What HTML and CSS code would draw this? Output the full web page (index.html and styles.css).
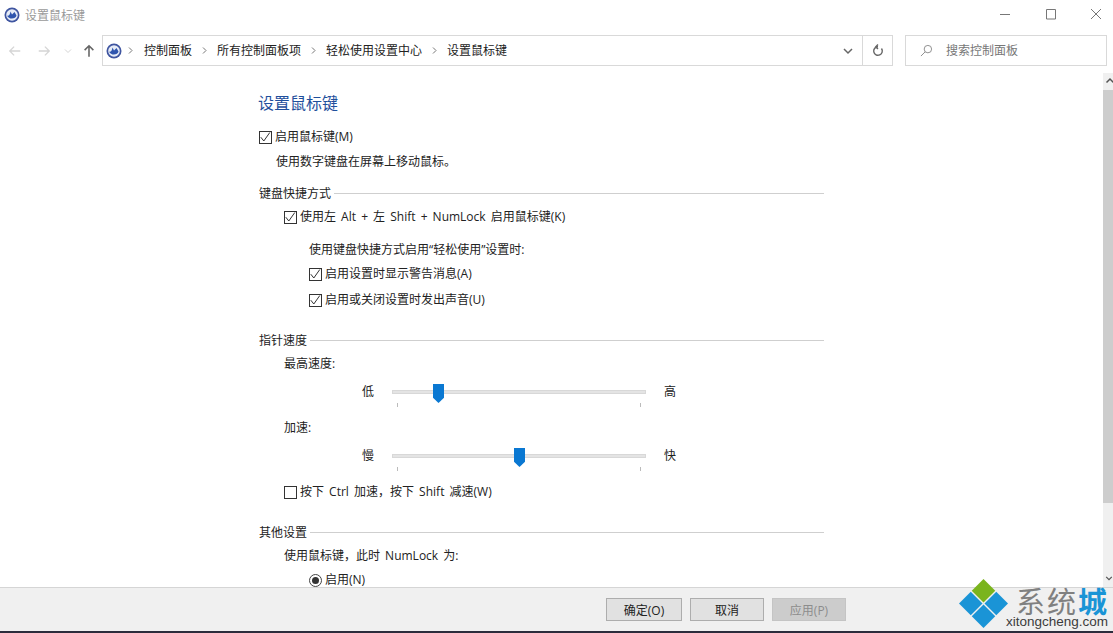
FILE: index.html
```html
<!DOCTYPE html>
<html lang="zh-CN">
<head>
<meta charset="utf-8">
<title>设置鼠标键</title>
<link rel="stylesheet" href="styles.css">
</head>
<body>
<div class="window">
  <header class="titlebar">
    <svg class="appicon" viewBox="0 0 16 16"><circle cx="8" cy="8" r="7.500" fill="#3f55a0"/><circle cx="8" cy="8" r="5.800" fill="#e6ecf7"/><path d="M3 8.500c1.500 1 3-.5 3.500-4l1.500 3 2.500-2.500 2 3.500c-.5 3-7 5-9.500 0z" fill="#2f55ae"/></svg>
    <span class="title">设置鼠标键</span>
    <div class="wincontrols">
      <svg class="winbtn" viewBox="0 0 46 32"><path d="M18 14.500h10" stroke="#777" fill="none"/></svg>
      <svg class="winbtn" viewBox="0 0 46 32"><path d="M18.500 9.500h9v9.500h-9z" stroke="#777" fill="none"/></svg>
      <svg class="winbtn" viewBox="0 0 46 32"><path d="M18 9l10 10M28 9L18 19" stroke="#777" fill="none"/></svg>
    </div>
  </header>
  <nav class="navbar">
    <div class="navbtns">
      <svg class="nav-arrow" viewBox="0 0 16 16"><path d="M14 8H2M7 3L2 8l5 5" stroke="#d5d5d5" stroke-width="1.500" fill="none"/></svg>
      <svg class="nav-arrow" viewBox="0 0 16 16"><path d="M2 8h12M9 3l5 5-5 5" stroke="#d5d5d5" stroke-width="1.500" fill="none"/></svg>
      <svg class="nav-down" viewBox="0 0 8 8"><path d="M1 2.500l3 3 3-3" stroke="#d5d5d5" fill="none"/></svg>
      <svg class="nav-arrow up" viewBox="0 0 16 16"><path d="M8 14.500V2M3 7l5-5 5 5" stroke="#666" stroke-width="1.800" fill="none"/></svg>
    </div>
    <div class="address">
      <svg class="appicon" viewBox="0 0 16 16"><circle cx="8" cy="8" r="7.500" fill="#3f55a0"/><circle cx="8" cy="8" r="5.800" fill="#e6ecf7"/><path d="M3 8.500c1.500 1 3-.5 3.500-4l1.500 3 2.500-2.500 2 3.500c-.5 3-7 5-9.500 0z" fill="#2f55ae"/></svg>
      <svg class="sep" viewBox="0 0 5 7"><path d="M1 .5l3 3-3 3" stroke="#777" fill="none"/></svg><span class="crumb">控制面板</span>
      <svg class="sep" viewBox="0 0 5 7"><path d="M1 .5l3 3-3 3" stroke="#777" fill="none"/></svg><span class="crumb">所有控制面板项</span>
      <svg class="sep" viewBox="0 0 5 7"><path d="M1 .5l3 3-3 3" stroke="#777" fill="none"/></svg><span class="crumb">轻松使用设置中心</span>
      <svg class="sep" viewBox="0 0 5 7"><path d="M1 .5l3 3-3 3" stroke="#777" fill="none"/></svg><span class="crumb">设置鼠标键</span>
      <div class="addr-right">
        <svg class="chev" viewBox="0 0 10 8"><path d="M1 2l4 4 4-4" stroke="#666" stroke-width="1.500" fill="none"/></svg>
        <div class="refresh"><svg viewBox="0 0 14 14"><path d="M10.500 4.500a4.300 4.300 0 1 1-3.500-1.800H5M7 .5L4.800 2.700 7 4.900" stroke="#666" stroke-width="1.400" fill="none"/></svg></div>
      </div>
    </div>
    <div class="search">
      <svg class="searchicon" viewBox="0 0 14 14"><circle cx="8.500" cy="5.500" r="4" stroke="#888" fill="none"/><path d="M5.500 8.500L1 13" stroke="#888" fill="none"/></svg>
      <span class="searchtext">搜索控制面板</span>
    </div>
  </nav>
  <div class="body">
    <main class="content">
      <h1 class="heading">设置鼠标键</h1>
      <div class="check m"><span class="box"><svg viewBox="0 0 11 11"><path d="M.8 5.200l3 3.800L9.800.5" stroke="#333" fill="none"/></svg></span>启用鼠标键(M)</div>
      <p class="desc">使用数字键盘在屏幕上移动鼠标。</p>

      <div class="legend first"><span>键盘快捷方式</span></div>
      <div class="check indent1 k"><span class="box"><svg viewBox="0 0 11 11"><path d="M.8 5.200l3 3.800L9.800.5" stroke="#333" fill="none"/></svg></span>使用左 Alt + 左 Shift + NumLock 启用鼠标键(K)</div>
      <p class="sub">使用键盘快捷方式启用“轻松使用”设置时:</p>
      <div class="check indent2 a"><span class="box"><svg viewBox="0 0 11 11"><path d="M.8 5.200l3 3.800L9.800.5" stroke="#333" fill="none"/></svg></span>启用设置时显示警告消息(A)</div>
      <div class="check indent2 u"><span class="box"><svg viewBox="0 0 11 11"><path d="M.8 5.200l3 3.800L9.800.5" stroke="#333" fill="none"/></svg></span>启用或关闭设置时发出声音(U)</div>

      <div class="legend speed"><span>指针速度</span></div>
      <p class="label top">最高速度:</p>
      <div class="sliderrow one"><span class="lo">低</span><div class="slider"><div class="track"></div><div class="thumb t1"></div><i class="tick l"></i><i class="tick r"></i></div><span class="hi">高</span></div>
      <p class="label accel">加速:</p>
      <div class="sliderrow two"><span class="lo">慢</span><div class="slider"><div class="track"></div><div class="thumb t2"></div><i class="tick l"></i><i class="tick r"></i></div><span class="hi">快</span></div>
      <div class="check indent1 w"><span class="box"></span>按下 Ctrl 加速&#xFF0C;按下 Shift 减速(W)</div>

      <div class="legend other"><span>其他设置</span></div>
      <p class="label num">使用鼠标键&#xFF0C;此时 NumLock 为:</p>
      <div class="radio"><span class="dot"></span>启用(N)</div>
    </main>
    <div class="scrollbar">
      <div class="sb-btn"><svg class="sb-arrow" viewBox="0 0 10 8"><path d="M1.500 5.500L5 2l3.500 3.500" stroke="#555" stroke-width="1.500" fill="none"/></svg></div>
      <div class="sb-thumb"></div>
      <div class="sb-rest"><svg class="sb-arrow" viewBox="0 0 10 8"><path d="M1.500 2.500L5 6l3.500-3.500" stroke="#555" stroke-width="1.500" fill="none"/></svg></div>
    </div>
  </div>
  <footer class="footer">
    <button class="btn ok">确定(O)</button>
    <button class="btn">取消</button>
    <button class="btn off">应用(P)</button>
  </footer>
  <div class="watermark">
    <svg class="wm-logo" viewBox="0 0 52 52"><path d="M26 1l12 12-12 12-12-12z" fill="#7ab41d"/><path d="M13 14l12 12-12 12L1 26z" fill="#1a94d6"/><path d="M39 14l12 12-12 12-12-12z" fill="#1a94d6"/><path d="M26 27l12 12-12 12-12-12z" fill="#1a94d6"/></svg>
    <div class="wm-cn">系统<b>城</b></div>
    <div class="wm-en">xitongcheng.com</div>
  </div>
</div>
</body>
</html>
```
FILE: styles.css
```css
* { box-sizing: border-box; }
html, body { margin: 0; padding: 0; }
body { width: 1113px; height: 633px; overflow: hidden; background: #fff; font-family: "Open Sans", "Noto Sans CJK SC", sans-serif; font-size: 12px; color: #222; }
.window { position: relative; width: 1113px; height: 633px; display: flex; flex-direction: column; border-bottom: 2px solid #2c2c3c; }
.titlebar { height: 32px; display: flex; align-items: center; padding: 0 0 3px 4px; flex: none; }
.appicon { width: 16px; height: 16px; flex: none; }
.title { margin-left: 5px; color: #9a9a9a; }
.wincontrols { margin-left: auto; margin-top: 3px; margin-right: -6px; display: flex; }
.winbtn { width: 46px; height: 32px; margin-left: -0.500px; }
.navbar { height: 34px; padding-top: 3px; display: flex; align-items: center; flex: none; }
.navbtns { width: 102px; display: flex; align-items: center; padding-left: 8px; flex: none; }
.nav-arrow { width: 14px; height: 14px; flex: none; margin-right: 15px; }
.nav-down { width: 8px; height: 8px; margin-left: -2px; margin-right: 10px; flex: none; }
.nav-arrow.up { margin-right: 0; }
.address { width: 791px; height: 31px; border: 1px solid #d9d9d9; display: flex; align-items: center; padding-left: 3px; }
.sep { width: 5px; height: 7px; margin: 0 10px; flex: none; }
.address .appicon + .sep { margin: 0 11px 0 6px; }
.crumb { color: #222; margin-bottom: 2px; }
.addr-right { margin-left: auto; height: 100%; display: flex; align-items: center; }
.chev { width: 10px; height: 8px; margin-right: 9px; }
.refresh { width: 30px; height: 100%; border-left: 1px solid #d9d9d9; display: flex; align-items: center; justify-content: center; }
.refresh svg { width: 14px; height: 14px; }
.search { width: 202px; height: 31px; margin-left: 12px; border: 1px solid #d9d9d9; display: flex; align-items: center; padding-left: 14px; color: #777; }
.searchicon { width: 13px; height: 13px; margin-right: 13px; }
.searchtext { margin-bottom: 1px; }
.body { flex: 1; min-height: 0; display: flex; overflow: hidden; }
.content { flex: 1; padding: 0 0 0 259px; overflow: hidden; word-spacing: 2px; }
.content p { margin: 0; height: 16px; line-height: 18px; }
.heading { margin: 0 0 0 -1px; padding-top: 26px; height: 59px; font-size: 16px; font-weight: 400; line-height: 22px; color: #1f4f9c; }
.check { display: flex; align-items: flex-start; height: 16px; line-height: 18px; }
.box { width: 13px; height: 13px; border: 1px solid #333; margin: 3px 3px 0 0; flex: none; background: #fff; display: flex; }
.box svg { width: 11px; height: 11px; }
.m { margin-top: 3px; }
.content .desc { margin: 9px 0 0 17px; }
.legend { width: 565px; display: flex; align-items: flex-start; height: 16px; line-height: 18px; }
.legend span { padding-right: 3px; }
.legend::after { content: ""; flex: 1; height: 1px; margin-top: 8px; background: #cfcfcf; }
.legend.first { margin-top: 16px; }
.indent1 { margin-left: 25px; }
.indent2 { margin-left: 50px; }
.k { margin-top: 7px; }
.content .sub { margin: 17px 0 0 50px; }
.a { margin-top: 8px; }
.u { margin-top: 10px; }
.legend.speed { margin-top: 25px; }
.content .label { margin-left: 25px; }
.content .label.top { margin-top: 7px; }
.sliderrow { display: flex; align-items: center; height: 20px; margin-left: 103px; margin-top: 10px; }
.lo { width: 30px; }
.hi { margin-left: 18px; }
.slider { position: relative; width: 254px; height: 20px; }
.track { position: absolute; left: 0; right: 0; top: 9px; height: 4px; background: #e4e4e4; border: 1px solid #d8d8d8; }
.thumb { position: absolute; top: 3px; width: 11px; height: 19px; background: #0a78d2; clip-path: polygon(0 0, 100% 0, 100% 72%, 50% 100%, 0 72%); }
.t1 { left: 41px; }
.t2 { left: 122px; }
.tick { position: absolute; top: 22px; width: 1px; height: 4px; background: #bbb; }
.tick.l { left: 5px; }
.tick.r { left: 248px; }
.content .label.accel { margin-top: 18px; }
.w { margin-top: 18px; }
.legend.other { margin-top: 25px; }
.content .label.num { margin-top: 7px; }
.radio { display: flex; align-items: flex-start; height: 16px; margin: 8px 0 0 50px; line-height: 18px; }
.dot { width: 13px; height: 13px; border: 1px solid #444; border-radius: 50%; margin: 3px 3px 0 0; display: flex; align-items: center; justify-content: center; flex: none; }
.dot::after { content: ""; width: 7px; height: 7px; border-radius: 50%; background: #333; }
.scrollbar { width: 10px; margin-top: 7px; background: #f0f0f0; display: flex; flex-direction: column; flex: none; overflow: hidden; }
.sb-btn { height: 17px; flex: none; padding: 4px 0 0 2px; }
.sb-arrow { width: 10px; height: 8px; display: block; }
.sb-thumb { height: 413px; flex: none; background: #cdcdcd; }
.sb-rest { flex: 1; display: flex; align-items: flex-end; padding: 0 0 5px 2px; }
.footer { height: 44px; flex: none; background: #f0f0f0; border-top: 1px solid #d5d5d5; display: flex; align-items: center; padding: 0 0 0 606px; gap: 8px; }
.btn { width: 74px; height: 23px; padding: 0; background: #e1e1e1; border: 1px solid #adadad; font: inherit; color: #222; }
.btn.ok { width: 76px; }
.btn.off { color: #8c8c8c; background: #ccc; border-color: #c4c4c4; }
.watermark { position: absolute; left: 959px; top: 578px; width: 154px; height: 52px; }
.wm-logo { position: absolute; left: -1px; top: 0; width: 51px; height: 51px; }
.wm-cn { position: absolute; left: 57px; top: 7px; font-size: 29px; line-height: 30px; letter-spacing: 2px; color: #808080; white-space: nowrap; font-family: "Noto Sans CJK SC", sans-serif; }
.wm-cn b { color: #1a94d6; font-weight: 700; }
.wm-en { position: absolute; left: 47px; top: 37px; font-family: "Liberation Sans", sans-serif; font-size: 13.500px; line-height: 14px; color: #3c3c3c; white-space: nowrap; }
```
